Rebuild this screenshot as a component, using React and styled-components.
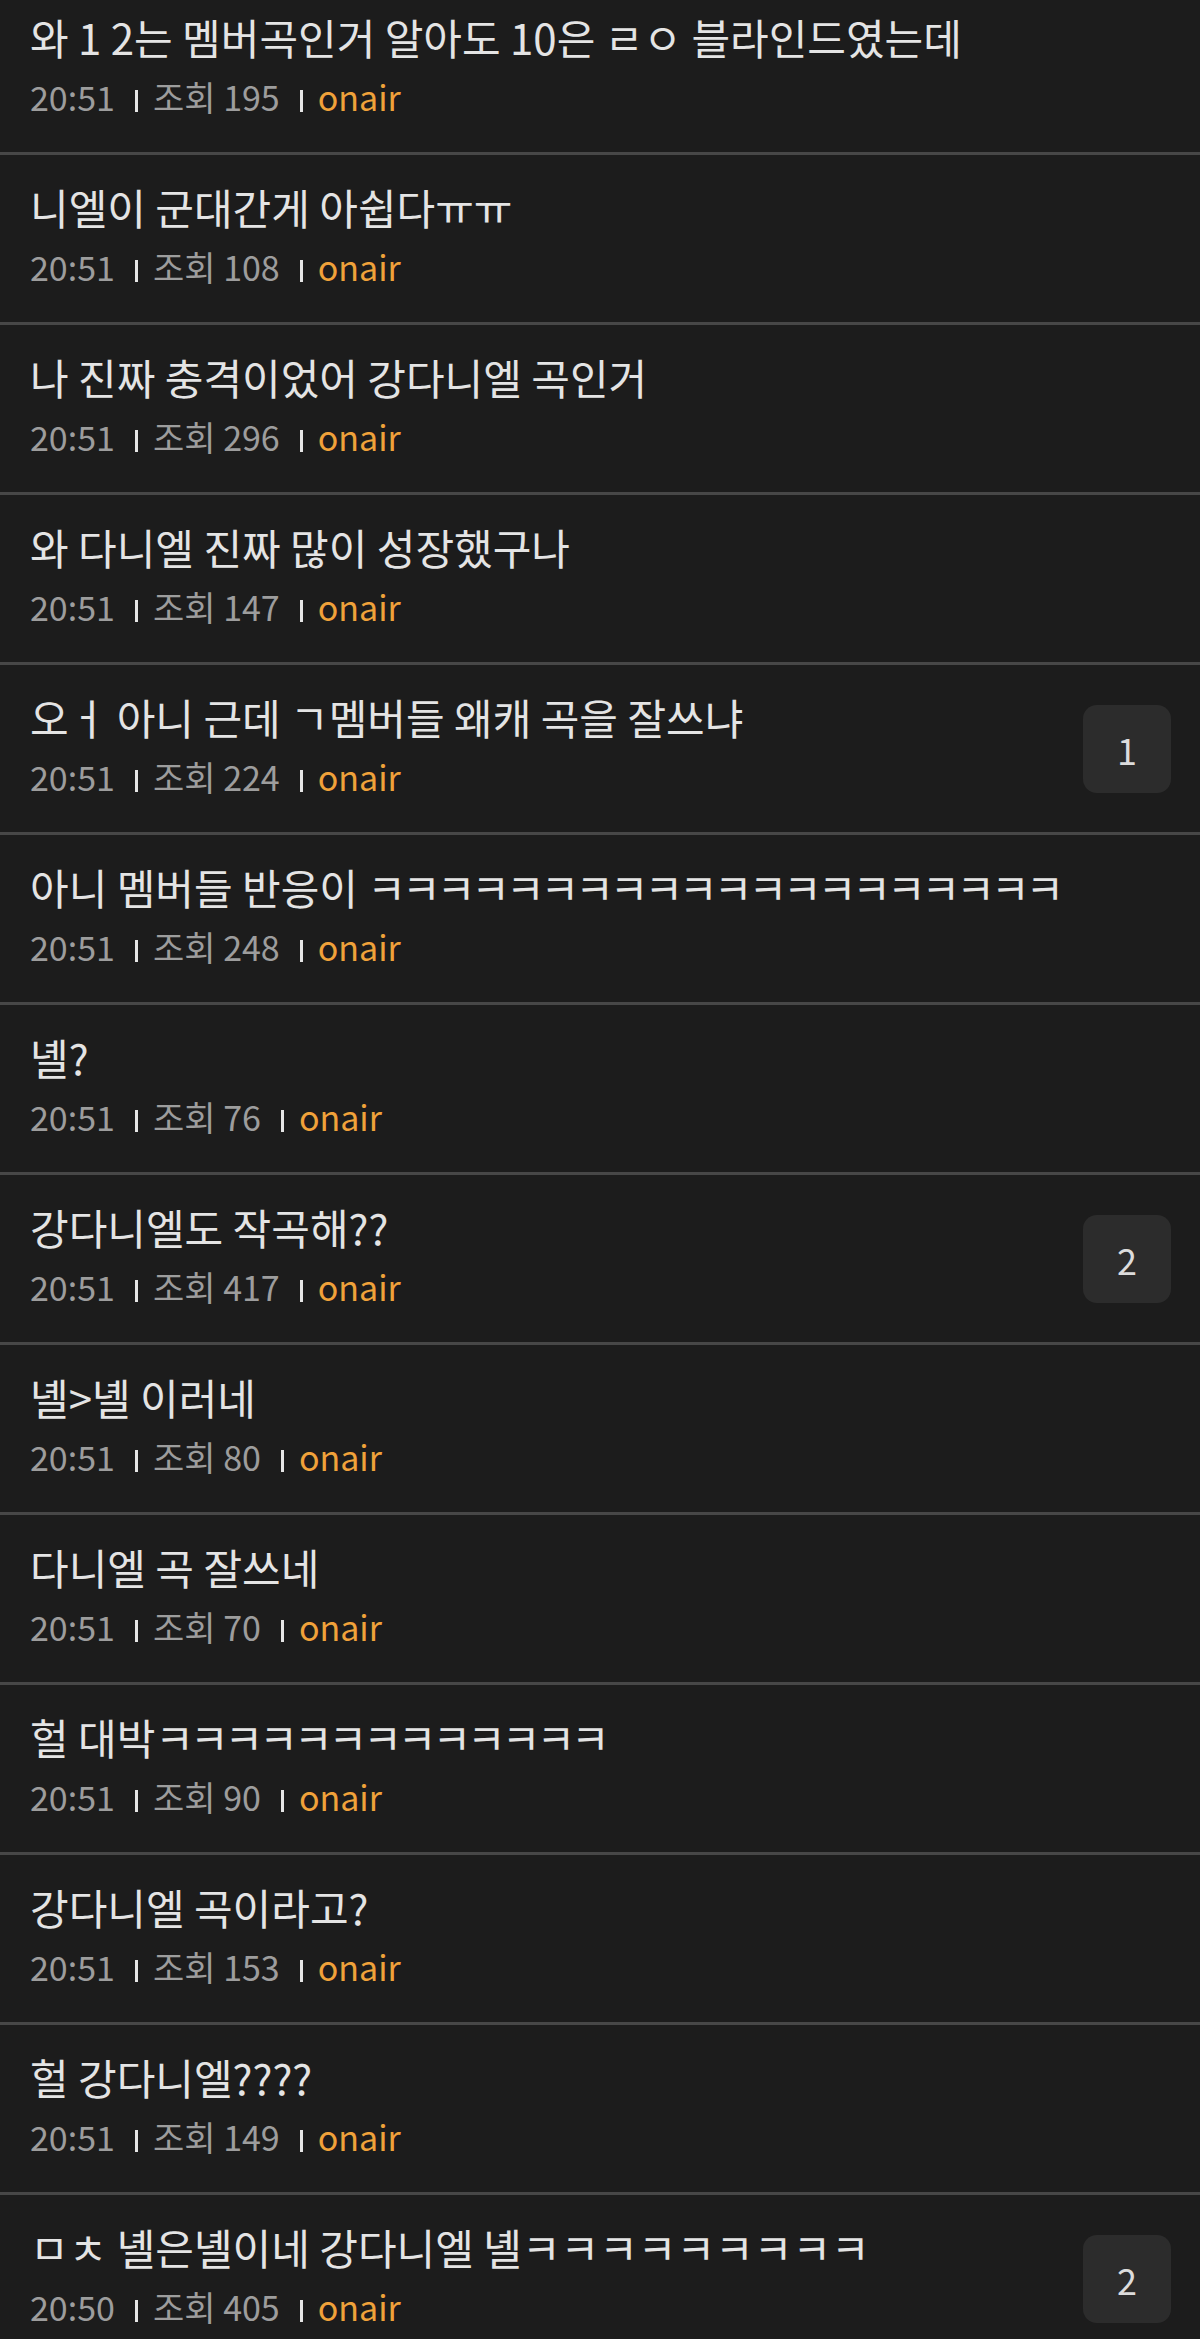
import React from "react";
import styled, { createGlobalStyle } from "styled-components";

const posts = [
    { title: "와 1 2는 멤버곡인거 알아도 10은 ㄹㅇ 블라인드였는데", time: "20:51", views: 195 },
    { title: "니엘이 군대간게 아쉽다ㅠㅠ", time: "20:51", views: 108 },
    { title: "나 진짜 충격이었어 강다니엘 곡인거", time: "20:51", views: 296 },
    { title: "와 다니엘 진짜 많이 성장했구나", time: "20:51", views: 147 },
    { title: "오ㅓ 아니 근데 ㄱ멤버들 왜캐 곡을 잘쓰냐", time: "20:51", views: 224, comments: 1 },
    { title: "아니 멤버들 반응이 ㅋㅋㅋㅋㅋㅋㅋㅋㅋㅋㅋㅋㅋㅋㅋㅋㅋㅋㅋㅋ", time: "20:51", views: 248, tight: true },
    { title: "녤?", time: "20:51", views: 76 },
    { title: "강다니엘도 작곡해??", time: "20:51", views: 417, comments: 2 },
    { title: "녤>녤 이러네", time: "20:51", views: 80 },
    { title: "다니엘 곡 잘쓰네", time: "20:51", views: 70 },
    { title: "헐 대박ㅋㅋㅋㅋㅋㅋㅋㅋㅋㅋㅋㅋㅋ", time: "20:51", views: 90, tight: true },
    { title: "강다니엘 곡이라고?", time: "20:51", views: 153 },
    { title: "헐 강다니엘????", time: "20:51", views: 149 },
    { title: "ㅁㅊ 녤은녤이네 강다니엘 녤ㅋㅋㅋㅋㅋㅋㅋㅋㅋ", time: "20:50", views: 405, comments: 2 },
];

const GlobalStyle = createGlobalStyle`
  html, body {
    margin: 0;
    padding: 0;
    background: #1c1c1c;
    overflow: hidden;
  }
  body {
    font-family: "Noto Sans CJK KR", "Noto Sans", sans-serif;
  }
`;

// split the ㅋㅋㅋ runs out so they can be spaced separately
const renderTitle = (title, tight) =>
    title.split(/(ㅋ+)/).map((part, i) =>
        part.startsWith("ㅋ") ? (
            <Laugh key={ i } $tight={ tight }>{ part }</Laugh>
        ) : (
            part
        )
    );

const App = () => (
    <>
        <GlobalStyle />
        <Page>
            <List>
                { posts.map((post, i) => (
                    <Row key={ i }>
                        <Body>
                            <Title>{ renderTitle(post.title, post.tight) }</Title>
                            <Meta>
                                <span>{ post.time }</span>
                                <Divider />
                                <span>조회 { post.views }</span>
                                <Divider />
                                <Board>onair</Board>
                            </Meta>
                        </Body>
                        { post.comments && <CommentCount>{ post.comments }</CommentCount> }
                    </Row>
                )) }
            </List>
        </Page>
    </>
);

const Page = styled.div`
  width: 1200px;
  height: 2339px;
  overflow: hidden;
  background: #1c1c1c;
`;

const List = styled.ul`
  list-style: none;
  margin: -15px 0 0;
  padding: 0;
`;

const Row = styled.li`
  display: flex;
  align-items: center;
  height: 167px;
  padding: 0 29px 0 30px;
  border-bottom: 3px solid #474747;
`;

const Body = styled.div`
  flex: 1;
  min-width: 0;
  align-self: flex-start;
  padding-top: 25px;
`;

const Title = styled.div`
  font-size: 42px;
  line-height: 54px;
  color: #e4e4e4;
  white-space: nowrap;
`;

const Laugh = styled.span`
  letter-spacing: ${ (p) => (p.$tight ? "-4px" : "0") };
`;

const Meta = styled.div`
  display: flex;
  align-items: baseline;
  margin-top: 11px;
  font-size: 34px;
  line-height: 44px;
  color: #9d9d9d;
`;

const Divider = styled.span`
  position: relative;
  top: 1px;
  width: 3px;
  height: 22px;
  margin: 0 15px 0 20px;
  background: #e6e6e6;
`;

const Board = styled.span`
  color: #f0a23a;
`;

const CommentCount = styled.div`
  display: flex;
  align-items: center;
  justify-content: center;
  width: 88px;
  height: 88px;
  border-radius: 14px;
  background: #2c2c2c;
  color: #dcdcdc;
  font-size: 36px;
`;

export default App;
